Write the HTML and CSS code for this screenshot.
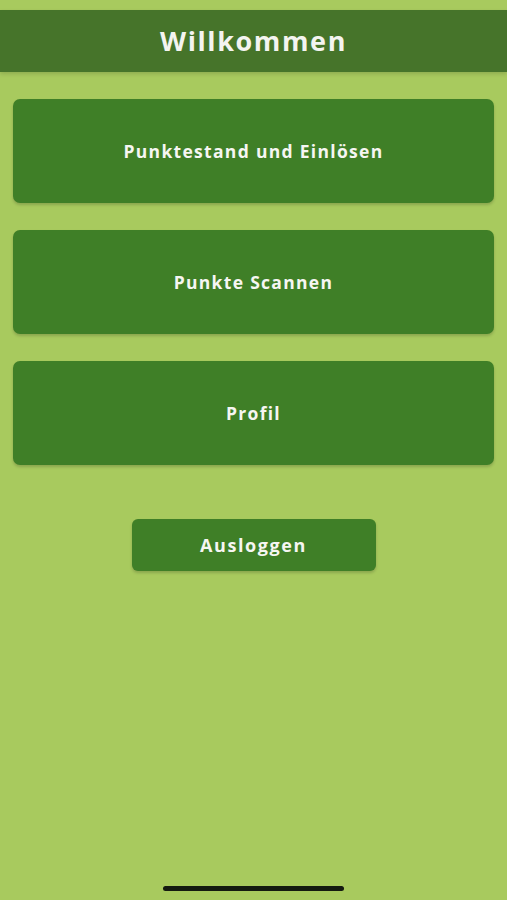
FILE: index.html
```html
<!DOCTYPE html>
<html lang="de">
<head>
  <meta charset="UTF-8">
  <meta name="viewport" content="width=device-width, initial-scale=1.0">
  <title>Willkommen</title>
  <link rel="stylesheet" href="styles.css">
</head>
<body>
  <div class="screen">
    <header class="app-bar">
      <h1>Willkommen</h1>
    </header>

    <nav class="menu">
      <button class="menu-card">Punktestand und Einlösen</button>
      <button class="menu-card">Punkte Scannen</button>
      <button class="menu-card">Profil</button>
    </nav>

    <div class="logout">
      <button class="logout-btn">Ausloggen</button>
    </div>

    <div class="home-indicator"></div>
  </div>
</body>
</html>
```

FILE: styles.css
```css
* {
  margin: 0;
  padding: 0;
  box-sizing: border-box;
  font-family: 'Open Sans', 'DejaVu Sans', sans-serif;
}

body {
  background-color: #a8ca5e;
  color: #fff;
}

.screen {
  display: flex;
  flex-direction: column;
  min-height: 900px;
  padding-top: 10px;
}

.app-bar {
  background-color: #46742a;
  height: 62px;
  display: flex;
  align-items: center;
  justify-content: center;
  box-shadow: 0 2px 4px rgba(0,0,0,0.15);
}

.app-bar h1 {
  font-size: 27px;
  font-weight: 700;
  letter-spacing: 1.6px;
  color: #f4f4f0;
  margin-top: -2px;
}

.menu {
  display: flex;
  flex-direction: column;
  gap: 27px;
  padding: 27px 13px 0;
}

.menu-card {
  height: 104px;
  width: 100%;
  border: none;
  border-radius: 7px;
  background-color: #3f7f27;
  color: #f6f6f2;
  font-size: 17.5px;
  font-weight: 700;
  letter-spacing: 1.3px;
  box-shadow: 0 2px 3px rgba(0,0,0,0.18);
  cursor: pointer;
}

.logout {
  display: flex;
  justify-content: center;
  padding-top: 54px;
}

.logout-btn {
  width: 244px;
  height: 52px;
  border: none;
  border-radius: 6px;
  background-color: #3f7f27;
  color: #f6f6f2;
  font-size: 18px;
  font-weight: 700;
  letter-spacing: 1.6px;
  box-shadow: 0 2px 3px rgba(0,0,0,0.18);
  cursor: pointer;
}

.home-indicator {
  margin-top: auto;
  margin-bottom: 9px;
  align-self: center;
  width: 181px;
  height: 5px;
  border-radius: 3px;
  background-color: #141a10;
}
```
